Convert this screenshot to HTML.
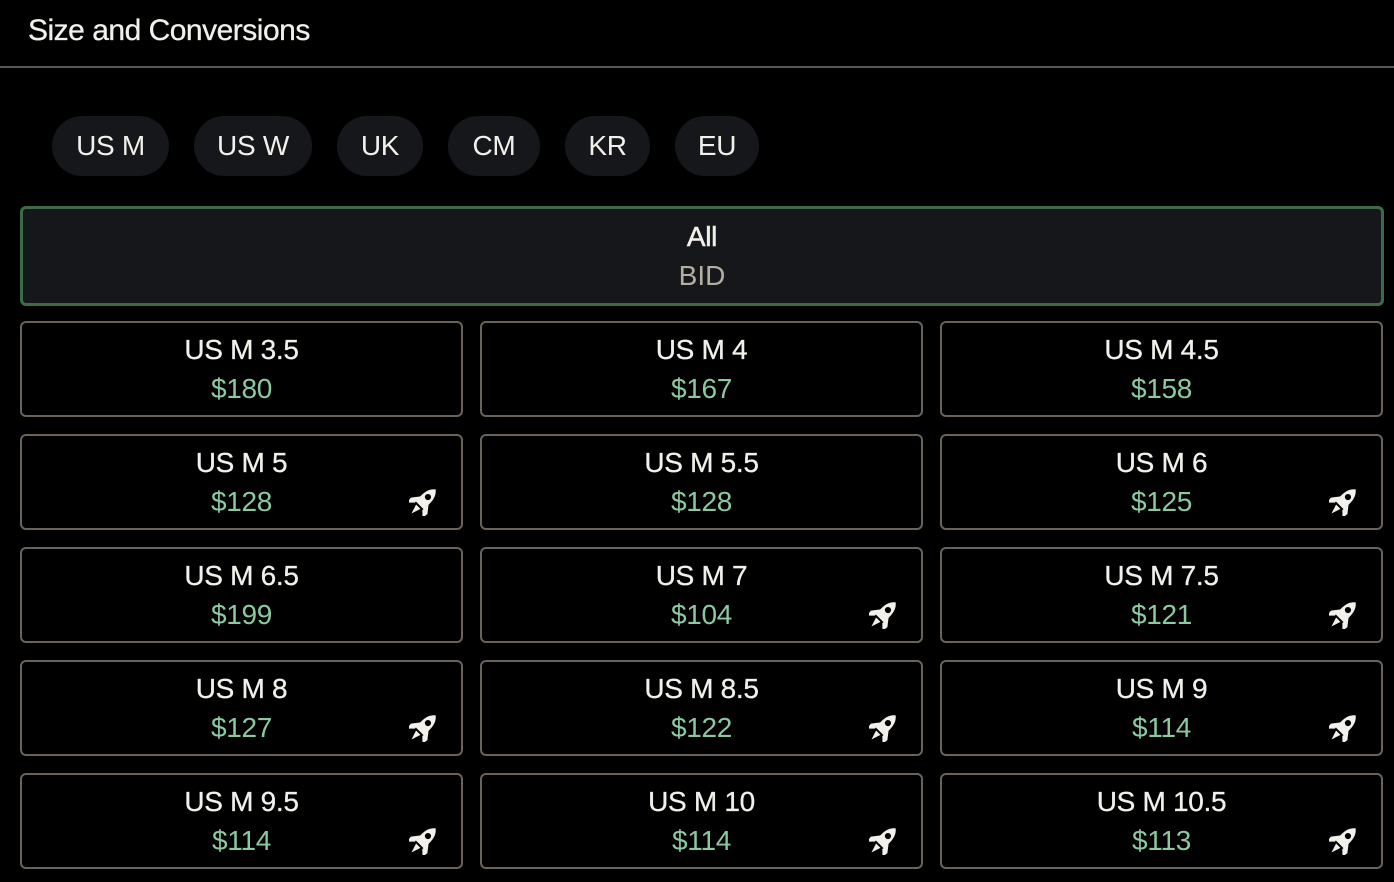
<!DOCTYPE html>
<html><head><style>
*{margin:0;padding:0;box-sizing:border-box}
body{width:1394px;height:882px;background:#000;font-family:"Liberation Sans",sans-serif;color:#f2f0ea;position:relative;overflow:hidden}
.h{position:absolute;left:28px;top:14px;font-size:30px;letter-spacing:-0.5px;-webkit-text-stroke:0.3px #f2f0ea}
.line{position:absolute;left:0;top:66px;width:1394px;height:2px;background:#5a5650}
.pill{position:absolute;top:116px;height:60px;border-radius:30px;background:#15171b;font-size:28px;line-height:60px;text-align:center;letter-spacing:-0.3px}
.all{position:absolute;left:20px;top:206px;width:1364px;height:100px;border:3px solid #3d6b47;border-radius:6px;background:#15171b;text-align:center}
.all .a{font-size:28px;margin-top:11px;line-height:34px;letter-spacing:-0.3px;-webkit-text-stroke:0.5px #f2f0ea}
.all .b{font-size:28px;line-height:44px;color:#b5ada0}
.c{position:absolute;width:443px;height:96px;border:2px solid #6b635a;border-radius:6px;text-align:center}
.c .s{font-size:28px;line-height:30px;margin-top:12px;letter-spacing:-0.3px;-webkit-text-stroke:0.3px #f2f0ea}
.c .p{font-size:28px;line-height:30px;margin-top:9px;color:#8cc9a1;letter-spacing:-0.3px}
.c svg{position:absolute;right:24px;bottom:12px}
</style></head><body>
<div class="h">Size and Conversions</div>
<div class="line"></div>
<div class="pill" style="left:52px;width:117px">US M</div>
<div class="pill" style="left:194px;width:118px">US W</div>
<div class="pill" style="left:337px;width:86px">UK</div>
<div class="pill" style="left:448px;width:92px">CM</div>
<div class="pill" style="left:565px;width:85px">KR</div>
<div class="pill" style="left:675px;width:84px">EU</div>
<div class="all"><div class="a">All</div><div class="b">BID</div></div>
<svg width="0" height="0" style="position:absolute"><defs>
<symbol id="r" viewBox="3 3 18 18">
<g transform="rotate(45 12 12)" fill="#f2f0ea">
<path d="M12 0.5 C15.8 3.5 16.2 8 15.6 15 L8.4 15 C7.8 8 8.2 3.5 12 0.5 Z"/>
<circle cx="12" cy="7.5" r="2" fill="#000"/>
<path d="M8.4 10.5 L4.5 15.5 L5 19.5 L8.6 16 Z"/>
<path d="M15.6 10.5 L19.5 15.5 L19 19.5 L15.4 16 Z"/>
<path d="M10 16.3 L14 16.3 L12 22.5 Z"/>
</g></symbol></defs></svg>
<div id="g"></div>
<script>
var d=[["US M 3.5","$180",0],["US M 4","$167",0],["US M 4.5","$158",0],
["US M 5","$128",1],["US M 5.5","$128",0],["US M 6","$125",1],
["US M 6.5","$199",0],["US M 7","$104",1],["US M 7.5","$121",1],
["US M 8","$127",1],["US M 8.5","$122",1],["US M 9","$114",1],
["US M 9.5","$114",1],["US M 10","$114",1],["US M 10.5","$113",1]];
var h="";d.forEach(function(x,i){var c=i%3,r=Math.floor(i/3);
h+='<div class="c" style="left:'+(20+c*460)+'px;top:'+(321+r*113)+'px"><div class="s">'+x[0]+'</div><div class="p">'+x[1]+'</div>'+(x[2]?'<svg width="28" height="28"><use href="#r"/></svg>':'')+'</div>';});
document.getElementById("g").innerHTML=h;
</script>
</body></html>
